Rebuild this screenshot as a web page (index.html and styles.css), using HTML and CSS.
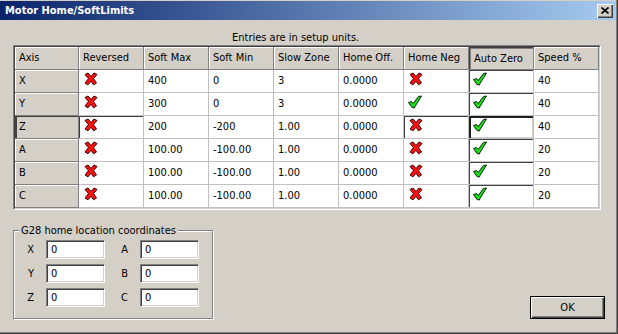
FILE: index.html
```html
<!DOCTYPE html>
<html>
<head>
<meta charset="utf-8">
<link rel="stylesheet" href="styles.css">
</head>
<body>
<svg class="defs" aria-hidden="true">
  <symbol id="ix" viewBox="0 0 16 14">
    <polygon points="3,2.5 6,1 9,4.5 12,1 15,2.5 11.5,6.5 14.5,11 11.5,12.8 9,9.2 6,12.8 3,11 6.5,6.5" fill="#ff1010" stroke="#3a0000" stroke-width="1" stroke-linejoin="round"/>
  </symbol>
  <symbol id="ic" viewBox="0 0 16 14">
    <polygon points="1.5,7.5 4.5,6.5 6.2,8.5 11.5,1.5 14.5,1 8,11.5 7.5,13 5,12.5" fill="#19e019" stroke="#062006" stroke-width="1" stroke-linejoin="round"/>
  </symbol>
</svg>
<div class="window">
  <div class="titlebar">
    <span class="title">Motor Home/SoftLimits</span>
    <button class="close" type="button"><svg width="8" height="7" viewBox="0 0 8 7"><path d="M0.5 0.5 L7.5 6.5 M7.5 0.5 L0.5 6.5" stroke="#000" stroke-width="1.7"/></svg></button>
  </div>
  <div class="content">
    <div class="caption">Entries are in setup units.</div>
    <div class="grid-outer">
      <div class="grid">
        <div class="c h">Axis</div>
        <div class="c h">Reversed</div>
        <div class="c h">Soft Max</div>
        <div class="c h">Soft Min</div>
        <div class="c h">Slow Zone</div>
        <div class="c h">Home Off.</div>
        <div class="c h">Home Neg</div>
        <div class="c h pressed">Auto Zero</div>
        <div class="c h">Speed %</div>

        <div class="c h">X</div>
        <div class="c i"><svg class="ico"><use href="#ix"/></svg></div>
        <div class="c">400</div>
        <div class="c">0</div>
        <div class="c">3</div>
        <div class="c">0.0000</div>
        <div class="c i"><svg class="ico"><use href="#ix"/></svg></div>
        <div class="c i sunk"><svg class="ico"><use href="#ic"/></svg></div>
        <div class="c">40</div>

        <div class="c h">Y</div>
        <div class="c i"><svg class="ico"><use href="#ix"/></svg></div>
        <div class="c">300</div>
        <div class="c">0</div>
        <div class="c">3</div>
        <div class="c">0.0000</div>
        <div class="c i"><svg class="ico"><use href="#ic"/></svg></div>
        <div class="c i sunk"><svg class="ico"><use href="#ic"/></svg></div>
        <div class="c">40</div>

        <div class="c h hsel">Z</div>
        <div class="c i sunk"><svg class="ico"><use href="#ix"/></svg></div>
        <div class="c">200</div>
        <div class="c">-200</div>
        <div class="c">1.00</div>
        <div class="c">0.0000</div>
        <div class="c i sunk"><svg class="ico"><use href="#ix"/></svg></div>
        <div class="c i focus"><svg class="ico"><use href="#ic"/></svg></div>
        <div class="c">40</div>

        <div class="c h">A</div>
        <div class="c i"><svg class="ico"><use href="#ix"/></svg></div>
        <div class="c">100.00</div>
        <div class="c">-100.00</div>
        <div class="c">1.00</div>
        <div class="c">0.0000</div>
        <div class="c i"><svg class="ico"><use href="#ix"/></svg></div>
        <div class="c i sunk"><svg class="ico"><use href="#ic"/></svg></div>
        <div class="c">20</div>

        <div class="c h">B</div>
        <div class="c i"><svg class="ico"><use href="#ix"/></svg></div>
        <div class="c">100.00</div>
        <div class="c">-100.00</div>
        <div class="c">1.00</div>
        <div class="c">0.0000</div>
        <div class="c i"><svg class="ico"><use href="#ix"/></svg></div>
        <div class="c i sunk"><svg class="ico"><use href="#ic"/></svg></div>
        <div class="c">20</div>

        <div class="c h">C</div>
        <div class="c i"><svg class="ico"><use href="#ix"/></svg></div>
        <div class="c">100.00</div>
        <div class="c">-100.00</div>
        <div class="c">1.00</div>
        <div class="c">0.0000</div>
        <div class="c i"><svg class="ico"><use href="#ix"/></svg></div>
        <div class="c i sunk"><svg class="ico"><use href="#ic"/></svg></div>
        <div class="c">20</div>
      </div>
    </div>
    <div class="bottom">
      <fieldset class="group">
        <legend>G28 home location coordinates</legend>
        <div class="coords">
          <span class="lbl">X</span><div class="field">0</div>
          <span class="lbl">A</span><div class="field">0</div>
          <span class="lbl">Y</span><div class="field">0</div>
          <span class="lbl">B</span><div class="field">0</div>
          <span class="lbl">Z</span><div class="field">0</div>
          <span class="lbl">C</span><div class="field">0</div>
        </div>
      </fieldset>
      <button class="ok" type="button">OK</button>
    </div>
  </div>
</div>
</body>
</html>
```
FILE: styles.css
```css
* { box-sizing: border-box; }
html, body { margin: 0; padding: 0; }
body {
  background: #d4d0c8;
  font-family: "DejaVu Sans Condensed", "DejaVu Sans", sans-serif;
  font-size: 11px;
  color: #000;
}
.defs { position: absolute; width: 0; height: 0; overflow: hidden; }

.window {
  width: 618px;
  height: 334px;
  padding-top: 1px;
  display: flex;
  flex-direction: column;
  background: #d4d0c8;
  box-shadow: inset -1px -1px 0 #404040, inset -2px -2px 0 #808080;
}

.titlebar {
  height: 19px;
  margin-right: 2px;
  padding: 0 3px 0 5px;
  display: flex;
  align-items: center;
  justify-content: space-between;
  background: linear-gradient(to right, #0a246a, #a6caf0);
}
.title {
  color: #fff;
  font-weight: bold;
  line-height: 13px;
}
.close {
  width: 16px;
  height: 14px;
  padding: 0;
  border: 0;
  display: flex;
  align-items: center;
  justify-content: center;
  background: #d4d0c8;
  box-shadow: inset 1px 1px 0 #fff, inset -1px -1px 0 #404040, inset -2px -2px 0 #808080;
}
.close svg { display: block; }

.content {
  flex: 1;
  display: flex;
  flex-direction: column;
  padding: 0 13px;
}
.caption {
  padding: 11px 0 1px 219px;
  line-height: 13px;
}

.grid-outer {
  width: 588px;
  border: 1px solid;
  border-color: #808080 #fff #fff #808080;
}
.grid {
  display: grid;
  grid-template-columns: 64px repeat(8, 65px);
  grid-auto-rows: 23px;
  border: 1px solid;
  border-color: #404040 #d4d0c8 #d4d0c8 #404040;
  background: #fff;
}
.c {
  background: #fff;
  border-right: 1px solid #c0c0c0;
  border-bottom: 1px solid #c0c0c0;
  padding-left: 4px;
  line-height: 22px;
  white-space: nowrap;
  overflow: hidden;
}
.h {
  background: #d4d0c8;
  border-right-color: #808080;
  border-bottom-color: #808080;
  box-shadow: inset 1px 1px 0 #fff;
}
.pressed {
  box-shadow: inset 1px 1px 0 #404040, inset 2px 2px 0 #808080;
  padding-left: 5px;
  padding-top: 1px;
}
.hsel {
  box-shadow: inset 2px 1px 0 #404040;
}
.i { padding: 2px 0 0 3px; }
.ico { display: block; width: 16px; height: 14px; }
.sunk {
  box-shadow: inset 1px 1px 0 #404040;
}
.focus {
  box-shadow: inset 2px 2px 0 #202020, inset -1px -1px 0 #d4d0c8;
}

.bottom {
  margin-top: 14px;
  display: flex;
  justify-content: space-between;
  align-items: flex-end;
}
.group {
  width: 200px;
  margin: 0;
  padding: 3px 0 11px 0;
  border: 1px solid #808080;
  box-shadow: 1px 1px 0 #fff, inset 1px 1px 0 #fff;
}
.group legend {
  margin-left: 5px;
  padding: 0 2px;
  line-height: 13px;
  background: #d4d0c8;
}
.coords {
  display: grid;
  grid-template-columns: 32px 59px 35px 59px;
  grid-auto-rows: 19px;
  row-gap: 5px;
}
.lbl {
  text-align: right;
  padding-right: 12px;
  line-height: 19px;
}
.field {
  height: 19px;
  padding-left: 4px;
  line-height: 17px;
  background: #fff;
  border: 1px solid;
  border-color: #808080 #fff #fff #808080;
  box-shadow: inset 1px 1px 0 #404040, inset -1px -1px 0 #d4d0c8;
}
.ok {
  width: 75px;
  height: 23px;
  padding: 0;
  font: inherit;
  color: #000;
  background: #d4d0c8;
  border: 1px solid #000;
  box-shadow: inset 1px 1px 0 #fff, inset -1px -1px 0 #404040, inset -2px -2px 0 #808080;
}
```
